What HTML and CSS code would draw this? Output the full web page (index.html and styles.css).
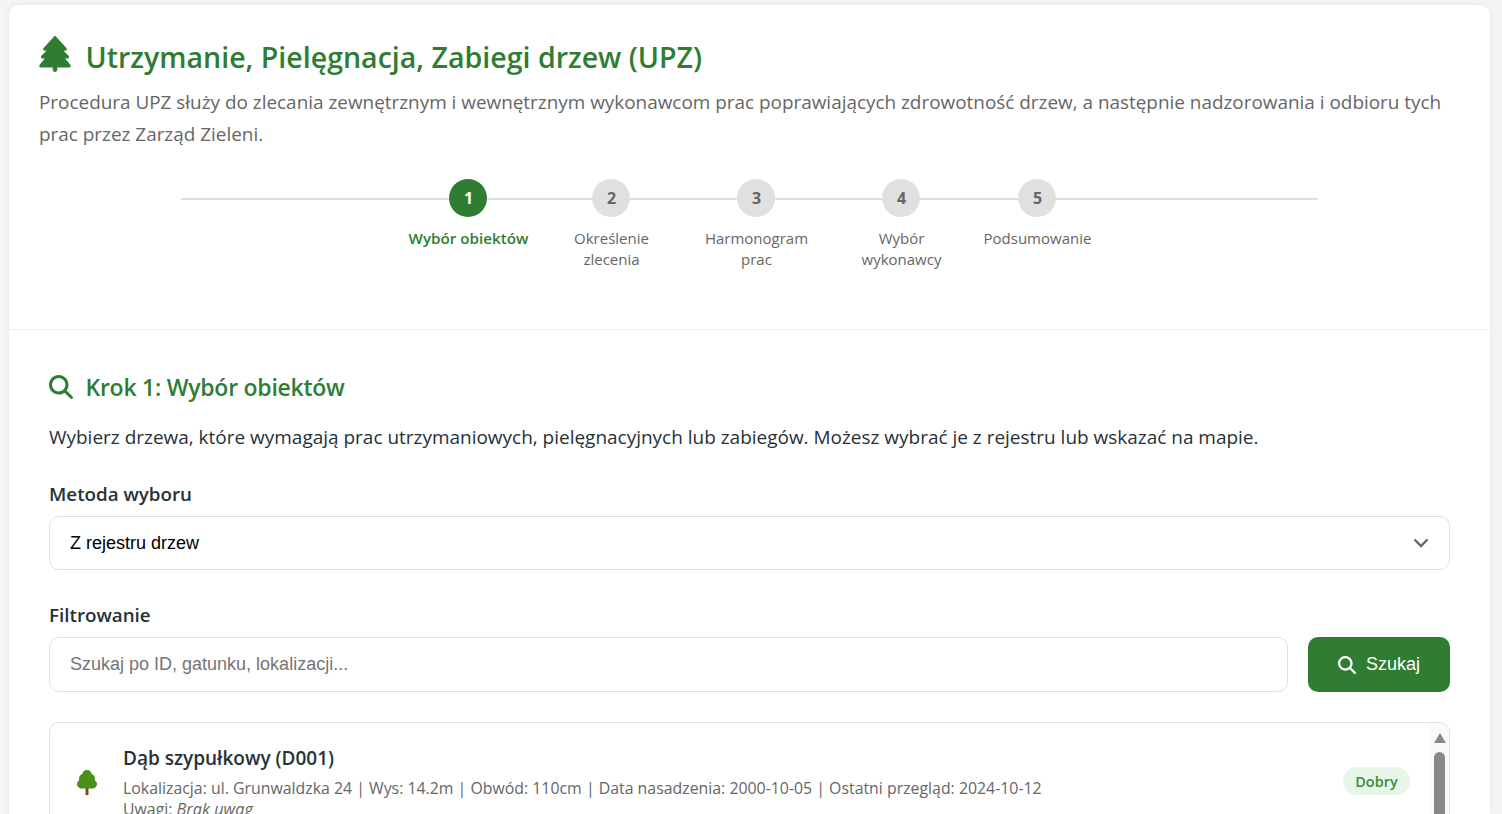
FILE: index.html
```html
<!DOCTYPE html>
<html lang="pl">
<head>
<meta charset="utf-8">
<title>UPZ</title>
<link rel="stylesheet" href="styles.css">
</head>
<body>
<main class="app">
  <header class="head">
    <h1 class="title">
      <svg class="title-icon" viewBox="0 0 448 512"><path d="M210.6 5.9L62 169.4c-3.9 4.2-6 9.8-6 15.5C56 197.7 66.3 208 79.1 208H104L30.6 281.4c-4.2 4.2-6.6 10-6.6 16C24 309.9 34.1 320 46.6 320H80L5.4 409.5C1.9 413.7 0 419 0 424.5c0 13 10.5 23.5 23.5 23.5H192v32c0 17.7 14.3 32 32 32s32-14.3 32-32V448H424.5c13 0 23.5-10.5 23.5-23.5c0-5.5-1.9-10.8-5.4-15L368 320h33.4c12.5 0 22.6-10.1 22.6-22.6c0-6-2.4-11.8-6.6-16L344 208h24.9c12.7 0 23.1-10.3 23.1-23.1c0-5.7-2.1-11.3-6-15.5L237.4 5.9C234 2.1 229.1 0 224 0s-10 2.1-13.4 5.9z"/></svg>
      Utrzymanie, Pielęgnacja, Zabiegi drzew (UPZ)
    </h1>
    <p class="lead">Procedura UPZ służy do zlecania zewnętrznym i wewnętrznym wykonawcom prac poprawiających zdrowotność drzew, a następnie nadzorowania i odbioru tych prac przez Zarząd Zieleni.</p>
    <ol class="stepper">
      <li class="step step-a active"><span class="dot">1</span><span class="step-label">Wybór obiektów</span></li>
      <li class="step step-b"><span class="dot">2</span><span class="step-label">Określenie zlecenia</span></li>
      <li class="step step-c"><span class="dot">3</span><span class="step-label">Harmonogram prac</span></li>
      <li class="step step-b"><span class="dot">4</span><span class="step-label">Wybór wykonawcy</span></li>
      <li class="step step-b"><span class="dot">5</span><span class="step-label">Podsumowanie</span></li>
    </ol>
  </header>
  <section class="content">
    <h2 class="section-title">
      <svg class="section-icon" viewBox="0 0 512 512"><path d="M416 208c0 45.9-14.9 88.3-40 122.7L502.6 457.4c12.5 12.5 12.5 32.8 0 45.3s-32.8 12.5-45.3 0L330.7 376c-34.4 25.2-76.8 40-122.7 40C93.1 416 0 322.9 0 208S93.1 0 208 0S416 93.1 416 208zM208 352a144 144 0 1 0 0-288 144 144 0 1 0 0 288z"/></svg>
      Krok 1: Wybór obiektów
    </h2>
    <p class="intro">Wybierz drzewa, które wymagają prac utrzymaniowych, pielęgnacyjnych lub zabiegów. Możesz wybrać je z rejestru lub wskazać na mapie.</p>
    <label class="field-label" for="method">Metoda wyboru</label>
    <div class="select-box">
      <select class="select" id="method"><option>Z rejestru drzew</option></select>
      <svg class="chevron" viewBox="0 0 16 10"><path d="M1.5 1.5L8 8l6.5-6.5"/></svg>
    </div>
    <label class="field-label filter-label" for="q">Filtrowanie</label>
    <div class="filter-row">
      <input class="input" id="q" type="text" placeholder="Szukaj po ID, gatunku, lokalizacji...">
      <button class="button" type="button">
        <svg class="button-icon" viewBox="0 0 512 512"><path d="M416 208c0 45.9-14.9 88.3-40 122.7L502.6 457.4c12.5 12.5 12.5 32.8 0 45.3s-32.8 12.5-45.3 0L330.7 376c-34.4 25.2-76.8 40-122.7 40C93.1 416 0 322.9 0 208S93.1 0 208 0S416 93.1 416 208zM208 352a144 144 0 1 0 0-288 144 144 0 1 0 0 288z"/></svg>
        Szukaj
      </button>
    </div>
    <div class="list">
      <article class="item">
        <svg class="item-icon" viewBox="0 0 20 25"><path class="trunk" d="M8.500 16h3v9h-3z"/><path class="crown" d="M10 0c2.600 0 4.400 1.800 4.700 4.100 2 .7 3.300 2.400 3.300 4.500 0 .6-.1 1.100-.3 1.600 1.400.8 2.300 2.200 2.300 3.800 0 2.700-2.200 4.500-5 4.500H5c-2.800 0-5-1.800-5-4.500 0-1.600.9-3 2.300-3.800C2.100 9.700 2 9.200 2 8.600c0-2.100 1.300-3.800 3.300-4.500C5.600 1.800 7.400 0 10 0z"/></svg>
        <div class="item-body">
          <h3 class="item-title">Dąb szypułkowy (D001)</h3>
          <p class="item-meta">Lokalizacja: ul. Grunwaldzka 24 | Wys: 14.2m | Obwód: 110cm | Data nasadzenia: 2000-10-05 | Ostatni przegląd: 2024-10-12</p>
          <p class="item-meta">Uwagi: <em class="note">Brak uwag</em></p>
        </div>
        <span class="badge">Dobry</span>
      </article>
      <div class="scrollbar"><span class="scroll-up"></span><span class="scroll-thumb"></span></div>
    </div>
  </section>
</main>
</body>
</html>
```
FILE: styles.css
```css
* { box-sizing: border-box; }
html, body { height: 100%; }
body {
  margin: 0;
  height: 814px;
  overflow: hidden;
  background: #f5f5f5;
  font-family: "Open Sans", "Noto Sans", sans-serif;
  color: #263238;
}
.app {
  width: 1481px;
  height: 809px;
  margin: 5px 0 0 9px;
  overflow: hidden;
  background: #fff;
  border-radius: 10px 10px 0 0;
  box-shadow: 0 0 10px rgba(0, 0, 0, 0.06);
}
.head {
  height: 325px;
  padding: 29px 30px 0;
  border-bottom: 1px solid #eeeeee;
}
.title {
  display: flex;
  align-items: center;
  gap: 14.5px;
  margin: 0;
  height: 44px;
  font-size: 28.55px;
  font-weight: 600;
  color: #2e7d32;
}
.title-icon { width: 32px; height: 36px; margin-top: -4px; fill: #2e7d32; flex: none; }
.lead {
  margin: 8px 0 0;
  font-size: 18.91px;
  line-height: 32px;
  color: #666666;
}
.stepper {
  position: relative;
  display: flex;
  justify-content: center;
  width: 80%;
  margin: 29px auto 0;
  padding: 0;
  list-style: none;
}
.stepper::before {
  content: "";
  position: absolute;
  left: 0;
  right: 0;
  top: 19px;
  height: 2px;
  background: #e0e0e0;
}
.step {
  position: relative;
  display: flex;
  flex-direction: column;
  align-items: center;
  text-align: center;
}
.step-a { width: 150px; }
.step-b { width: 136px; }
.step-c { width: 154px; }
.dot {
  display: flex;
  align-items: center;
  justify-content: center;
  width: 38px;
  height: 38px;
  border-radius: 50%;
  background: #e0e0e0;
  color: #666666;
  font-size: 16px;
  font-weight: 700;
}
.step-label {
  max-width: 121px;
  margin-top: 11px;
  font-size: 15px;
  line-height: 21px;
  color: #666666;
}
.active .dot { background: #2e7d32; color: #fff; }
.active .step-label { color: #2e7d32; font-size: 15.2px; font-weight: 600; }
.content { padding: 39px 40px 0; }
.section-title {
  display: flex;
  align-items: center;
  gap: 12.5px;
  margin: 0;
  height: 36px;
  font-size: 23px;
  letter-spacing: -0.25px;
  font-weight: 600;
  color: #2e7d32;
}
.section-icon { width: 24px; height: 24px; fill: #2e7d32; flex: none; }
.intro {
  margin: 16px 0 0;
  font-size: 18.98px;
  line-height: 32px;
  color: #263238;
}
.field-label {
  display: block;
  margin-top: 28px;
  font-size: 18.8px;
  line-height: 26px;
  font-weight: 600;
  color: #263238;
}
.select-box { position: relative; margin-top: 9px; }
.select {
  display: block;
  width: 100%;
  height: 54px;
  padding: 0 20px;
  appearance: none;
  background: #fff;
  border: 1px solid #e0e0e0;
  border-radius: 10px;
  font-family: "Liberation Sans", Arial, sans-serif;
  font-size: 18px;
  color: #000;
}
.chevron {
  position: absolute;
  right: 21px;
  top: 22px;
  width: 16px;
  height: 10px;
  fill: none;
  stroke: #666666;
  stroke-width: 2.4;
}
.filter-label { margin-top: 32px; }
.filter-row { display: flex; gap: 20px; margin-top: 9px; }
.input {
  flex: 1;
  height: 55px;
  padding: 0 20px;
  background: #fff;
  border: 1px solid #e0e0e0;
  border-radius: 10px;
  font-family: "Liberation Sans", Arial, sans-serif;
  font-size: 18px;
}
.input::placeholder { color: #757575; }
.button {
  display: flex;
  align-items: center;
  justify-content: center;
  gap: 10px;
  width: 142px;
  height: 55px;
  background: #2e7d32;
  border: 0;
  border-radius: 10px;
  color: #fff;
  font-family: "Liberation Sans", Arial, sans-serif;
  font-size: 18px;
}
.button-icon { width: 18px; height: 18px; fill: #fff; flex: none; }
.list {
  position: relative;
  display: flex;
  margin-top: 30px;
  height: 300px;
  border: 1px solid #e0e0e0;
  border-radius: 10px;
  overflow: hidden;
}
.item {
  display: flex;
  align-items: center;
  flex: 1;
  height: 118px;
  padding: 0 20px 0 27px;
}
.item-icon { width: 20px; height: 25px; flex: none; }
.crown { fill: #4a8f1a; }
.trunk { fill: #7a4a2b; }
.item-body { flex: 1; margin-left: 26px; }
.item-title {
  margin: 0 0 6px;
  font-size: 19px;
  line-height: 28px;
  font-weight: 600;
  color: #263238;
}
.item-meta {
  margin: 0;
  font-size: 15.86px;
  line-height: 21px;
  color: #666666;
}
.note { font-size: 16.3px; }
.badge {
  width: 67px;
  height: 28px;
  margin-top: -2px;
  border-radius: 14px;
  background: #e8f5e9;
  color: #388e3c;
  font-size: 14.5px;
  line-height: 29px;
  font-weight: 600;
  text-align: center;
}
.scrollbar {
  flex: none;
  display: flex;
  flex-direction: column;
  align-items: center;
  width: 19px;
  background: #fafafa;
}
.scroll-up {
  margin-top: 10px;
  border-left: 6.5px solid transparent;
  border-right: 6.5px solid transparent;
  border-bottom: 10px solid #888888;
}
.scroll-thumb {
  width: 11px;
  height: 200px;
  margin-top: 9px;
  border-radius: 6px;
  background: #888888;
}
```
